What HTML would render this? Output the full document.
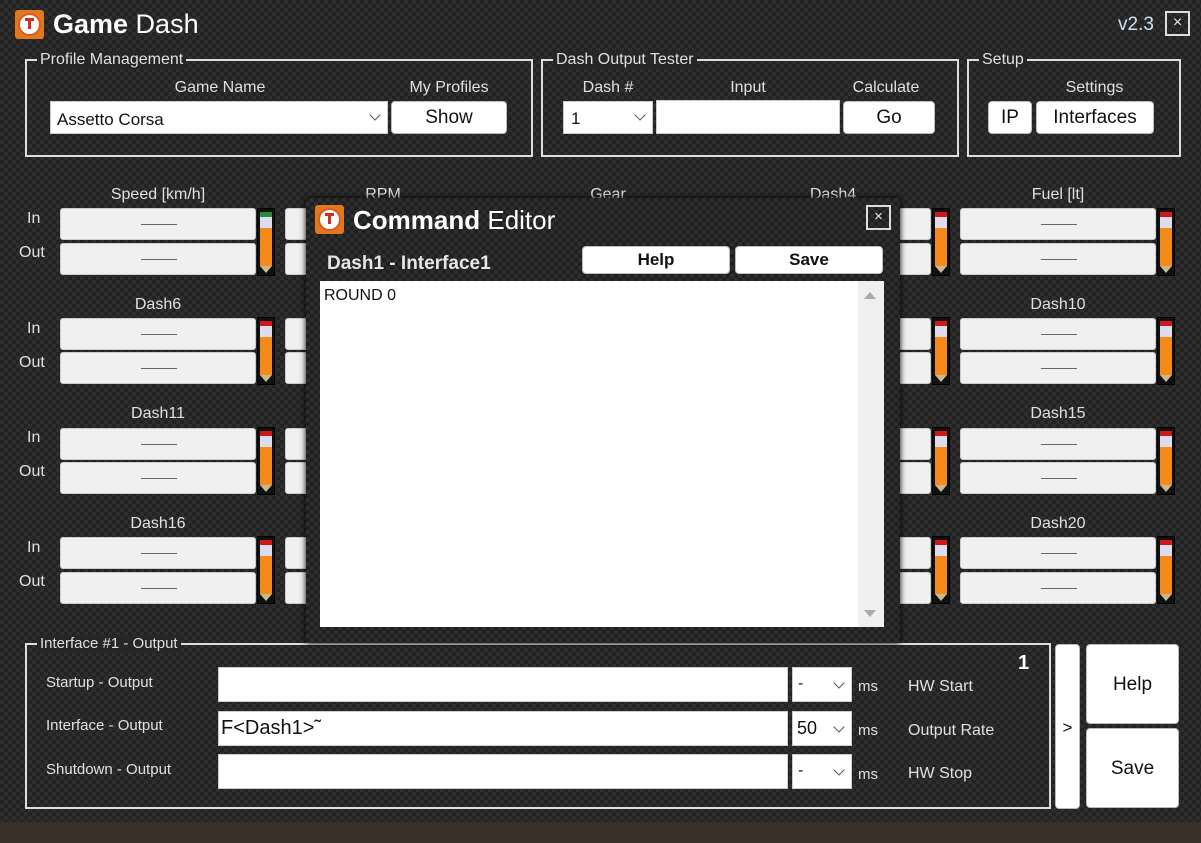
<!DOCTYPE html>
<html><head><meta charset="utf-8"><style>
*{margin:0;padding:0;box-sizing:border-box}
body{width:1201px;height:843px;overflow:hidden;position:relative;font-family:"Liberation Sans",sans-serif;color:#e8e8e8;
background-color:#232323;
background-image:linear-gradient(45deg,#2e2e2e 25%,transparent 25%,transparent 75%,#2e2e2e 75%),linear-gradient(45deg,#2e2e2e 25%,transparent 25%,transparent 75%,#2e2e2e 75%);
background-size:8px 8px;background-position:0 0,4px 4px}
.a{position:absolute}
.grp{position:absolute;border:2px solid #ddd}
.gl{position:absolute;top:-10px;left:10px;background:#262626;padding:0 3px;font-size:16px;line-height:18px;color:#e0e0e0}
.lbl{position:absolute;font-size:16px;color:#e0e0e0;text-align:center}
.btn{position:absolute;background:#fff;border-radius:4px;color:#111;font-size:19px;text-align:center;border:1px solid #bbb}
.inp{position:absolute;background:#fff;border:1px solid #ccc;color:#111}
.box{position:absolute;width:196px;height:32px;background:#f0f0f0;border-radius:3px;border:1px solid #ccc}
.box:after{content:"";position:absolute;left:80px;width:36px;top:15px;border-top:1px solid #666}
.pen{position:absolute;width:18px;height:68px;background:#111;border:1px solid #000}
.pen i{position:absolute;left:2px;width:12px}
.chev{position:absolute;right:8px;top:9px;width:8px;height:8px;border-right:1.5px solid #555;border-bottom:1.5px solid #555;transform:rotate(45deg)}
.rl{position:absolute;font-size:16px;color:#e0e0e0}
</style></head><body>
<div class="a" style="left:0;top:820px;width:1201px;height:23px;background:#3a3028"></div>
<div class="a" style="left:0;top:0;width:1201px;height:822px;background:inherit"></div>

<!-- title -->
<div class="a" style="left:15px;top:10px;width:29px;height:29px;background:#e07820;border-radius:3px"><div class="a" style="left:3px;top:3px;width:23px;height:23px;border-radius:50%;background:#fff;border:2px solid #e05a20"></div><div class="a" style="left:10px;top:8px;width:9px;height:3px;background:#d03020"></div><div class="a" style="left:13px;top:10px;width:3px;height:9px;background:#d03020"></div></div>
<div class="a" style="left:53px;top:9px;font-size:27px;color:#fff"><b>Game</b> Dash</div>
<div class="a" style="left:1118px;top:14px;font-size:19px;color:#cfe0f0">v2.3</div>
<div class="a" style="left:1165px;top:11px;width:25px;height:25px;border:2px solid #ddd;text-align:center;font-size:16px;line-height:20px">×</div>

<!-- top groups -->
<div class="grp" style="left:25px;top:59px;width:508px;height:98px"><div class="gl">Profile Management</div></div>
<div class="lbl" style="left:140px;top:79px;width:160px">Game Name</div>
<div class="lbl" style="left:391px;top:79px;width:116px">My Profiles</div>
<div class="inp" style="left:50px;top:101px;width:338px;height:33px;font-size:17px;padding:8px 6px">Assetto Corsa<div class="chev"></div></div>
<div class="btn" style="left:391px;top:101px;width:116px;height:33px;line-height:31px">Show</div>

<div class="grp" style="left:541px;top:59px;width:418px;height:98px"><div class="gl">Dash Output Tester</div></div>
<div class="lbl" style="left:563px;top:79px;width:90px">Dash #</div>
<div class="lbl" style="left:656px;top:79px;width:184px">Input</div>
<div class="lbl" style="left:843px;top:79px;width:86px">Calculate</div>
<div class="inp" style="left:563px;top:101px;width:90px;height:33px;font-size:17px;padding:7px 7px">1<div class="chev"></div></div>
<div class="inp" style="left:656px;top:100px;width:184px;height:34px"></div>
<div class="btn" style="left:843px;top:101px;width:92px;height:33px;line-height:31px">Go</div>

<div class="grp" style="left:967px;top:59px;width:214px;height:98px"><div class="gl">Setup</div></div>
<div class="lbl" style="left:1036px;top:79px;width:117px">Settings</div>
<div class="btn" style="left:988px;top:101px;width:44px;height:33px;line-height:31px">IP</div>
<div class="btn" style="left:1036px;top:101px;width:118px;height:33px;line-height:31px">Interfaces</div>

<!-- grid labels -->
<div class="lbl" style="left:60px;top:186px;width:196px">Speed [km/h]</div>
<div class="lbl" style="left:285px;top:186px;width:196px">RPM</div>
<div class="lbl" style="left:510px;top:186px;width:196px">Gear</div>
<div class="lbl" style="left:735px;top:186px;width:196px">Dash4</div>
<div class="lbl" style="left:960px;top:186px;width:196px">Fuel [lt]</div>
<div class="lbl" style="left:60px;top:296px;width:196px">Dash6</div>
<div class="lbl" style="left:960px;top:296px;width:196px">Dash10</div>
<div class="lbl" style="left:60px;top:405px;width:196px">Dash11</div>
<div class="lbl" style="left:960px;top:405px;width:196px">Dash15</div>
<div class="lbl" style="left:60px;top:515px;width:196px">Dash16</div>
<div class="lbl" style="left:960px;top:515px;width:196px">Dash20</div>

<div class="rl" style="left:27px;top:210px">In</div><div class="rl" style="left:19px;top:244px">Out</div>
<div class="rl" style="left:27px;top:320px">In</div><div class="rl" style="left:19px;top:354px">Out</div>
<div class="rl" style="left:27px;top:429px">In</div><div class="rl" style="left:19px;top:463px">Out</div>
<div class="rl" style="left:27px;top:539px">In</div><div class="rl" style="left:19px;top:573px">Out</div>

<!-- boxes rows -->
<div class="box" style="left:60px;top:208px"></div><div class="box" style="left:60px;top:243px"></div>
<div class="box" style="left:285px;top:208px"></div><div class="box" style="left:285px;top:243px"></div>
<div class="box" style="left:735px;top:208px"></div><div class="box" style="left:735px;top:243px"></div>
<div class="box" style="left:960px;top:208px"></div><div class="box" style="left:960px;top:243px"></div>
<div class="box" style="left:60px;top:318px"></div><div class="box" style="left:60px;top:352px"></div>
<div class="box" style="left:285px;top:318px"></div><div class="box" style="left:285px;top:352px"></div>
<div class="box" style="left:735px;top:318px"></div><div class="box" style="left:735px;top:352px"></div>
<div class="box" style="left:960px;top:318px"></div><div class="box" style="left:960px;top:352px"></div>
<div class="box" style="left:60px;top:428px"></div><div class="box" style="left:60px;top:462px"></div>
<div class="box" style="left:285px;top:428px"></div><div class="box" style="left:285px;top:462px"></div>
<div class="box" style="left:735px;top:428px"></div><div class="box" style="left:735px;top:462px"></div>
<div class="box" style="left:960px;top:428px"></div><div class="box" style="left:960px;top:462px"></div>
<div class="box" style="left:60px;top:537px"></div><div class="box" style="left:60px;top:572px"></div>
<div class="box" style="left:285px;top:537px"></div><div class="box" style="left:285px;top:572px"></div>
<div class="box" style="left:735px;top:537px"></div><div class="box" style="left:735px;top:572px"></div>
<div class="box" style="left:960px;top:537px"></div><div class="box" style="left:960px;top:572px"></div>

<!-- pencils -->
<div class="pen" style="left:257px;top:208px"><i style="top:3px;height:5px;background:#2a8a3a"></i><i style="top:8px;height:11px;background:#dde"></i><i style="top:19px;height:38px;background:#f5891a"></i><i style="top:57px;height:7px;background:#c8b890;clip-path:polygon(0 0,100% 0,50% 100%)"></i></div>
<div class="pen" style="left:932px;top:208px"><i style="top:3px;height:5px;background:#d01818"></i><i style="top:8px;height:11px;background:#dde"></i><i style="top:19px;height:38px;background:#f5891a"></i><i style="top:57px;height:7px;background:#c8b890;clip-path:polygon(0 0,100% 0,50% 100%)"></i></div>
<div class="pen" style="left:1157px;top:208px"><i style="top:3px;height:5px;background:#d01818"></i><i style="top:8px;height:11px;background:#dde"></i><i style="top:19px;height:38px;background:#f5891a"></i><i style="top:57px;height:7px;background:#c8b890;clip-path:polygon(0 0,100% 0,50% 100%)"></i></div>
<div class="pen" style="left:257px;top:317px"><i style="top:3px;height:5px;background:#d01818"></i><i style="top:8px;height:11px;background:#dde"></i><i style="top:19px;height:38px;background:#f5891a"></i><i style="top:57px;height:7px;background:#c8b890;clip-path:polygon(0 0,100% 0,50% 100%)"></i></div>
<div class="pen" style="left:932px;top:317px"><i style="top:3px;height:5px;background:#d01818"></i><i style="top:8px;height:11px;background:#dde"></i><i style="top:19px;height:38px;background:#f5891a"></i><i style="top:57px;height:7px;background:#c8b890;clip-path:polygon(0 0,100% 0,50% 100%)"></i></div>
<div class="pen" style="left:1157px;top:317px"><i style="top:3px;height:5px;background:#d01818"></i><i style="top:8px;height:11px;background:#dde"></i><i style="top:19px;height:38px;background:#f5891a"></i><i style="top:57px;height:7px;background:#c8b890;clip-path:polygon(0 0,100% 0,50% 100%)"></i></div>
<div class="pen" style="left:257px;top:427px"><i style="top:3px;height:5px;background:#d01818"></i><i style="top:8px;height:11px;background:#dde"></i><i style="top:19px;height:38px;background:#f5891a"></i><i style="top:57px;height:7px;background:#c8b890;clip-path:polygon(0 0,100% 0,50% 100%)"></i></div>
<div class="pen" style="left:932px;top:427px"><i style="top:3px;height:5px;background:#d01818"></i><i style="top:8px;height:11px;background:#dde"></i><i style="top:19px;height:38px;background:#f5891a"></i><i style="top:57px;height:7px;background:#c8b890;clip-path:polygon(0 0,100% 0,50% 100%)"></i></div>
<div class="pen" style="left:1157px;top:427px"><i style="top:3px;height:5px;background:#d01818"></i><i style="top:8px;height:11px;background:#dde"></i><i style="top:19px;height:38px;background:#f5891a"></i><i style="top:57px;height:7px;background:#c8b890;clip-path:polygon(0 0,100% 0,50% 100%)"></i></div>
<div class="pen" style="left:257px;top:536px"><i style="top:3px;height:5px;background:#d01818"></i><i style="top:8px;height:11px;background:#dde"></i><i style="top:19px;height:38px;background:#f5891a"></i><i style="top:57px;height:7px;background:#c8b890;clip-path:polygon(0 0,100% 0,50% 100%)"></i></div>
<div class="pen" style="left:932px;top:536px"><i style="top:3px;height:5px;background:#d01818"></i><i style="top:8px;height:11px;background:#dde"></i><i style="top:19px;height:38px;background:#f5891a"></i><i style="top:57px;height:7px;background:#c8b890;clip-path:polygon(0 0,100% 0,50% 100%)"></i></div>
<div class="pen" style="left:1157px;top:536px"><i style="top:3px;height:5px;background:#d01818"></i><i style="top:8px;height:11px;background:#dde"></i><i style="top:19px;height:38px;background:#f5891a"></i><i style="top:57px;height:7px;background:#c8b890;clip-path:polygon(0 0,100% 0,50% 100%)"></i></div>

<!-- bottom group -->
<div class="grp" style="left:25px;top:643px;width:1026px;height:166px"><div class="gl" style="font-size:15px">Interface #1 - Output</div></div>
<div class="rl" style="left:46px;top:674px;font-size:15px">Startup - Output</div>
<div class="rl" style="left:46px;top:717px;font-size:15px">Interface - Output</div>
<div class="rl" style="left:46px;top:761px;font-size:15px">Shutdown - Output</div>
<div class="inp" style="left:218px;top:667px;width:570px;height:35px"></div>
<div class="inp" style="left:218px;top:711px;width:570px;height:35px;font-size:20px;padding:5px 2px">F&lt;Dash1&gt;˜</div>
<div class="inp" style="left:218px;top:754px;width:570px;height:35px"></div>
<div class="inp" style="left:792px;top:667px;width:60px;height:35px;font-size:16px;padding:7px 5px">-<div class="chev" style="top:11px"></div></div>
<div class="inp" style="left:792px;top:711px;width:60px;height:35px;font-size:18px;padding:6px 4px">50<div class="chev" style="top:11px"></div></div>
<div class="inp" style="left:792px;top:754px;width:60px;height:35px;font-size:16px;padding:7px 5px">-<div class="chev" style="top:11px"></div></div>
<div class="rl" style="left:858px;top:678px;font-size:15px">ms</div>
<div class="rl" style="left:858px;top:722px;font-size:15px">ms</div>
<div class="rl" style="left:858px;top:766px;font-size:15px">ms</div>
<div class="rl" style="left:908px;top:678px;font-size:16px">HW Start</div>
<div class="rl" style="left:908px;top:722px;font-size:16px">Output Rate</div>
<div class="rl" style="left:908px;top:765px;font-size:16px">HW Stop</div>
<div class="rl" style="left:1018px;top:652px;font-size:20px;font-weight:bold;color:#fff">1</div>
<div class="btn" style="left:1055px;top:644px;width:25px;height:165px;line-height:165px;font-size:17px">&gt;</div>
<div class="btn" style="left:1086px;top:644px;width:93px;height:80px;line-height:80px">Help</div>
<div class="btn" style="left:1086px;top:728px;width:93px;height:80px;line-height:80px">Save</div>

<!-- dialog -->
<div class="a" style="left:306px;top:198px;width:594px;height:445px;background:inherit;background-color:#1f1f1f;box-shadow:0 0 6px #000"></div>
<div class="a" style="left:315px;top:205px;width:29px;height:29px;background:#e07820;border-radius:3px"><div class="a" style="left:3px;top:3px;width:23px;height:23px;border-radius:50%;background:#fff;border:2px solid #e05a20"></div><div class="a" style="left:10px;top:8px;width:9px;height:3px;background:#d03020"></div><div class="a" style="left:13px;top:10px;width:3px;height:9px;background:#d03020"></div></div>
<div class="a" style="left:353px;top:205px;font-size:26px;color:#fff"><b>Command</b> Editor</div>
<div class="a" style="left:866px;top:205px;width:25px;height:25px;border:2px solid #ddd;text-align:center;font-size:15px;line-height:20px">×</div>
<div class="a" style="left:327px;top:253px;font-size:19px;font-weight:bold;color:#e6e6e6">Dash1 - Interface1</div>
<div class="btn" style="left:582px;top:246px;width:148px;height:28px;line-height:26px;font-size:17px;font-weight:bold">Help</div>
<div class="btn" style="left:735px;top:246px;width:148px;height:28px;line-height:26px;font-size:17px;font-weight:bold">Save</div>
<div class="a" style="left:320px;top:281px;width:564px;height:346px;background:#fff"><div class="a" style="left:4px;top:6px;font-size:16px;color:#111">ROUND 0</div><div class="a" style="right:0;top:0;width:26px;height:346px;background:#f0f0f0"></div><div class="a" style="right:8px;top:11px;border:6px solid transparent;border-bottom:7px solid #aaa;border-top:0"></div><div class="a" style="right:8px;bottom:10px;border:6px solid transparent;border-top:7px solid #aaa;border-bottom:0"></div></div>
</body></html>
